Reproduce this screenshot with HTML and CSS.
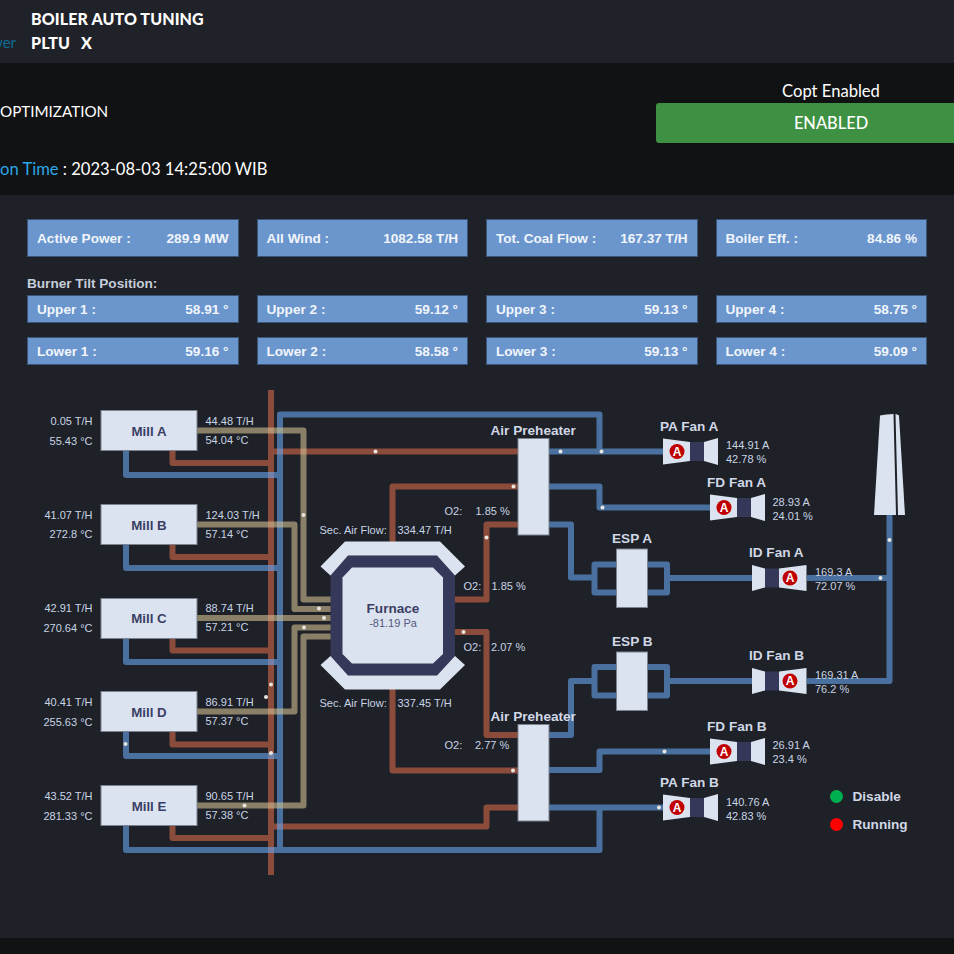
FILE: index.html
```html
<!DOCTYPE html>
<html lang="en">
	<head>
		<meta charset="UTF-8" />
		<meta name="viewport" content="width=device-width, initial-scale=1.0" />
		<title>Boiler Auto Tuning</title>
		<link rel="stylesheet" href="styles.css">
	</head>
	<body>
		<header class="topbar">
			<span class="crumb">wer</span>
			<div class="title">
				<div>BOILER AUTO TUNING</div>
				<div>PLTU <span class="unit">X</span></div>
			</div>
		</header>

		<section class="band">
			<div class="band-left">
				<div class="band-name">OPTIMIZATION</div>
				<div class="band-time"><span class="time-label">on Time</span> : 2023-08-03 14:25:00 WIB</div>
			</div>
			<div class="band-right">
				<div class="copt-label">Copt Enabled</div>
				<button class="copt-btn">ENABLED</button>
			</div>
		</section>

		<main class="content">
			<div class="stats">
				<div class="row row-main">
					<div class="card"><span>Active Power :</span><span>289.9 MW</span></div>
					<div class="card"><span>All Wind :</span><span>1082.58 T/H</span></div>
					<div class="card"><span>Tot. Coal Flow :</span><span>167.37 T/H</span></div>
					<div class="card"><span>Boiler Eff. :</span><span>84.86 %</span></div>
				</div>
				<div class="tilt-label">Burner Tilt Position:</div>
				<div class="row">
					<div class="card"><span>Upper 1 :</span><span>58.91 °</span></div>
					<div class="card"><span>Upper 2 :</span><span>59.12 °</span></div>
					<div class="card"><span>Upper 3 :</span><span>59.13 °</span></div>
					<div class="card"><span>Upper 4 :</span><span>58.75 °</span></div>
				</div>
				<div class="row">
					<div class="card"><span>Lower 1 :</span><span>59.16 °</span></div>
					<div class="card"><span>Lower 2 :</span><span>58.58 °</span></div>
					<div class="card"><span>Lower 3 :</span><span>59.13 °</span></div>
					<div class="card"><span>Lower 4 :</span><span>59.09 °</span></div>
				</div>
			</div>

			<svg class="diagram" viewBox="0 380 954 558" width="954" height="558">
				<defs>
					<g id="fan">
						<path class="shell" d="M0 -13L27 -9.5V9.5L0 13Z" />
						<rect class="neck" x="27" y="-9.5" width="14" height="19" />
						<path class="shell" d="M41 -9.5L55 -13.5V13.5L41 9.5Z" />
						<circle class="motor" cx="14" cy="0" r="7.5" />
						<text class="motor-a" x="14" y="4">A</text>
					</g>
					<g id="fan-id">
						<path class="shell" d="M0 -13L13 -9.5V9.5L0 13Z" />
						<rect class="neck" x="13" y="-9.5" width="14" height="19" />
						<path class="shell" d="M27 -9.5L54.5 -13V13L27 9.5Z" />
						<circle class="motor" cx="38" cy="0" r="7.5" />
						<text class="motor-a" x="38" y="4">A</text>
					</g>
				</defs>

				<!-- flue / hot air -->
				<g class="pipes pipe-red">
					<path d="M271 390V875" />
					<path d="M172.500 451V463H271" />
					<path d="M172.500 544V557H271" />
					<path d="M172.500 638V650.500H271" />
					<path d="M172.500 732V744.500H271" />
					<path d="M172.500 825V838H271" />
					<path d="M271 451.500H518" />
					<path d="M271 826.500H486.500V807.500H518" />
					<path d="M392.500 545V486.500H518" />
					<path d="M455 599.500H486.500V524.500H518" />
					<path d="M455 632H486.500V735H518" />
					<path d="M392.500 688V770.500H518" />
				</g>

				<!-- air -->
				<g class="pipes pipe-blue">
					<path d="M126 451V475H280" />
					<path d="M126 544V568H280" />
					<path d="M126 638V662H280" />
					<path d="M126 732V756H280" />
					<path d="M126 825V850H599.500V807.500" />
					<path d="M280 850V414.500H599.500V451.500" />
					<path d="M549 451.500H663" />
					<path d="M549 486.500H599.500V507.500H710" />
					<path d="M549 524.500H571V577.500H594.500" />
					<path d="M594.500 564.500H667V592.500H594.500Z" />
					<path d="M667 578H752" />
					<path d="M807 578H889.500" />
					<path d="M889.500 515V681H807" />
					<path d="M549 735H571V681H594.500" />
					<path d="M594.500 667H667V695.500H594.500Z" />
					<path d="M667 681H752" />
					<path d="M549 770H599.500V751.500H710" />
					<path d="M549 807.500H663" />
				</g>

				<!-- coal -->
				<g class="pipes pipe-tan">
					<path d="M197 430.500H303.500V599.500H335" />
					<path d="M197 524.500H294.500V609H335" />
					<path d="M197 618H335" />
					<path d="M197 711.500H294.500V627.500H335" />
					<path d="M197 805.500H303.500V636.500H335" />
				</g>

				<g class="dots">
					<circle cx="303.500" cy="515" r="2" />
					<circle cx="319" cy="608.500" r="2" />
					<circle cx="324" cy="618" r="2" />
					<circle cx="304" cy="627.500" r="2" />
					<circle cx="271" cy="684.500" r="2" />
					<circle cx="266" cy="697" r="2" />
					<circle cx="125.500" cy="744" r="2" />
					<circle cx="271" cy="753" r="2" />
					<circle cx="244.500" cy="805.500" r="2" />
					<circle cx="375.500" cy="451.500" r="2" />
					<circle cx="513.500" cy="486.500" r="2" />
					<circle cx="486.500" cy="537.500" r="2" />
					<circle cx="463.500" cy="632" r="2" />
					<circle cx="513" cy="770.500" r="2" />
					<circle cx="560.500" cy="451.500" r="2" />
					<circle cx="601.500" cy="451.500" r="2" />
					<circle cx="602.500" cy="507.500" r="2" />
					<circle cx="664.500" cy="751.500" r="2" />
					<circle cx="659" cy="807.500" r="2" />
					<circle cx="889.500" cy="540" r="2" />
					<circle cx="880.500" cy="578" r="2" />
				</g>

				<!-- mills -->
				<rect class="box" x="101" y="410.500" width="96" height="40" />
				<rect class="box" x="101" y="504.500" width="96" height="40" />
				<rect class="box" x="101" y="598.500" width="96" height="40" />
				<rect class="box" x="101" y="691.500" width="96" height="40" />
				<rect class="box" x="101" y="785.500" width="96" height="40" />
				<text class="box-name" x="149" y="435.500">Mill A</text>
				<text class="box-name" x="149" y="529.500">Mill B</text>
				<text class="box-name" x="149" y="623">Mill C</text>
				<text class="box-name" x="149" y="716.500">Mill D</text>
				<text class="box-name" x="149" y="810.500">Mill E</text>

				<g class="val val-end">
					<text x="92.500" y="425">0.05 T/H</text>
					<text x="92.500" y="445">55.43 °C</text>
					<text x="92.500" y="519">41.07 T/H</text>
					<text x="92.500" y="538">272.8 °C</text>
					<text x="92.500" y="612">42.91 T/H</text>
					<text x="92.500" y="632">270.64 °C</text>
					<text x="92.500" y="706">40.41 T/H</text>
					<text x="92.500" y="726">255.63 °C</text>
					<text x="92.500" y="800">43.52 T/H</text>
					<text x="92.500" y="820">281.33 °C</text>
				</g>
				<g class="val">
					<text x="205.500" y="425">44.48 T/H</text>
					<text x="205.500" y="444">54.04 °C</text>
					<text x="205.500" y="519">124.03 T/H</text>
					<text x="205.500" y="537.500">57.14 °C</text>
					<text x="205.500" y="612">88.74 T/H</text>
					<text x="205.500" y="631">57.21 °C</text>
					<text x="205.500" y="706">86.91 T/H</text>
					<text x="205.500" y="725">57.37 °C</text>
					<text x="205.500" y="800">90.65 T/H</text>
					<text x="205.500" y="819">57.38 °C</text>

					<text x="319.500" y="534">Sec. Air Flow:</text>
					<text x="397.500" y="534">334.47 T/H</text>
					<text x="319.500" y="707">Sec. Air Flow:</text>
					<text x="397.500" y="707">337.45 T/H</text>

					<text x="444.500" y="515">O2:</text>
					<text x="475.500" y="515">1.85 %</text>
					<text x="463.500" y="590">O2:</text>
					<text x="491.500" y="590">1.85 %</text>
					<text x="463.500" y="651">O2:</text>
					<text x="491" y="651">2.07 %</text>
					<text x="444.500" y="749">O2:</text>
					<text x="475" y="749">2.77 %</text>

					<text x="726" y="449">144.91 A</text>
					<text x="726" y="463">42.78 %</text>
					<text x="772.500" y="505.500">28.93 A</text>
					<text x="772.500" y="520">24.01 %</text>
					<text x="815" y="576">169.3 A</text>
					<text x="815" y="590">72.07 %</text>
					<text x="815" y="679">169.31 A</text>
					<text x="815" y="693">76.2 %</text>
					<text x="772.500" y="749">26.91 A</text>
					<text x="772.500" y="763">23.4 %</text>
					<text x="726" y="806">140.76 A</text>
					<text x="726" y="820">42.83 %</text>
				</g>

				<!-- furnace -->
				<polygon class="furnace-wall" points="348,555.500 437,555.500 455,575 455,656.500 437,675.500 348,675.500 330.500,656.500 330.500,575" />
				<polygon class="furnace-hood" points="345,541.500 440,541.500 465,566.500 455,575.500 437,555.500 348,555.500 330.500,575.500 320.500,566.500" />
				<polygon class="furnace-hood" points="345,689.500 440,689.500 465,665 455,656 437,675.500 348,675.500 330.500,656 320.500,665" />
				<polygon class="furnace-core" points="352,567.500 433,567.500 443,577.500 443,654 433,663.500 352,663.500 342.500,654 342.500,577.500" />
				<text class="furnace-name" x="393" y="613">Furnace</text>
				<text class="furnace-val" x="393" y="627">-81.19 Pa</text>

				<!-- preheaters, esp -->
				<rect class="box" x="518" y="438.500" width="31" height="96.500" />
				<rect class="box" x="518" y="724.500" width="31" height="96.500" />
				<rect class="box" x="616.500" y="549" width="31" height="58.500" />
				<rect class="box" x="616.500" y="652" width="31" height="58.500" />

				<g class="label">
					<text x="490.500" y="435">Air Preheater</text>
					<text x="490.500" y="721">Air Preheater</text>
					<text x="612" y="542.500">ESP A</text>
					<text x="612" y="645.500">ESP B</text>
					<text x="660" y="431">PA Fan A</text>
					<text x="707" y="487">FD Fan A</text>
					<text x="749" y="557">ID Fan A</text>
					<text x="749" y="660">ID Fan B</text>
					<text x="707" y="731">FD Fan B</text>
					<text x="660" y="787">PA Fan B</text>
				</g>

				<use href="#fan" x="663" y="451.500" />
				<use href="#fan" x="710" y="507.500" />
				<use href="#fan-id" x="752" y="578" />
				<use href="#fan-id" x="752" y="681" />
				<use href="#fan" x="710" y="751.500" />
				<use href="#fan" x="663" y="807.500" />

				<!-- stack -->
				<path class="stack" d="M880 415.500Q886 414 893.500 414L896 515H874Z" />
				<path class="stack" d="M895.500 414Q897 414 899 415.500L905 515H898Z" />

				<circle class="led-green" cx="836.500" cy="796.500" r="6.500" />
				<circle class="led-red" cx="836.500" cy="824.500" r="6.500" />
				<g class="label">
					<text x="852.500" y="801">Disable</text>
					<text x="852.500" y="829">Running</text>
				</g>
			</svg>
		</main>

		<footer class="bottom"></footer>
	</body>
</html>
```

FILE: styles.css
```css
html, body {
	margin: 0;
	height: 954px;
	overflow: hidden;
	background: #1e2127;
}

body {
	font-family: Lato, "Open Sans", sans-serif;
	color: #fff;
}

.topbar {
	display: flex;
	height: 63px;
	background: #1f2329;
}

.crumb {
	flex: 0 0 25px;
	align-self: flex-end;
	margin: 0 0 11px -9px;
	color: #0d6c93;
	font-size: 15px;
	line-height: 20px;
	text-align: right;
}

.title {
	margin-left: 15px;
	padding-top: 7px;
	font-size: 16px;
	font-weight: 900;
	letter-spacing: 0.1px;
	line-height: 24px;
}

.title .unit {
	margin-left: 7px;
}

.band {
	display: flex;
	justify-content: space-between;
	height: 132px;
	background: #111213;
	font-size: 16.6px;
	line-height: 24px;
}

.band-left {
	padding-top: 36px;
}

.band-name {
	font-size: 15.2px;
}

.band-time {
	margin-top: 34px;
}

.time-label {
	color: #2ba6e6;
}

.band-right {
	flex: 0 0 298px;
	padding-top: 16px;
	text-align: center;
}

.copt-label {
	height: 24px;
	padding-left: 52px;
}

.copt-btn {
	display: block;
	width: 100%;
	height: 40px;
	padding: 0 0 2px 52px;
	border: none;
	border-radius: 3px 0 0 3px;
	background: #3e9142;
	color: #fff;
	font-family: inherit;
	font-size: 16.4px;
	font-weight: 500;
}

.content {
	height: 743px;
	overflow: hidden;
}

.stats {
	display: flex;
	flex-direction: column;
	gap: 14px;
	padding: 24px 27px 0;
	font-family: "Liberation Sans", Arial, sans-serif;
	font-size: 13.6px;
	font-weight: 700;
}

.row {
	display: grid;
	grid-template-columns: repeat(4, 1fr);
	gap: 18px;
}

.card {
	display: flex;
	justify-content: space-between;
	align-items: center;
	height: 28px;
	padding: 0 9px;
	border: 1px solid #3a5577;
	box-sizing: border-box;
	background: #6a96cd;
	color: #f1f5fb;
}

.row-main .card {
	height: 38px;
}

.tilt-label {
	height: 16px;
	margin: 5px 0 -11px;
	color: #c6cdda;
	line-height: 16px;
}

.diagram {
	display: block;
	margin-top: 15px;
	font-family: "Liberation Sans", Arial, sans-serif;
}

.pipes {
	fill: none;
	stroke-width: 6;
	stroke-linejoin: round;
	opacity: 0.6;
}

.pipe-red {
	stroke: #d5694a;
}

.pipe-blue {
	stroke: #67a5ed;
}

.pipe-tan {
	stroke: #d2bf93;
}

.dots {
	fill: #e8e4e0;
}

.box {
	fill: #dce3f0;
	stroke: #7c8290;
	stroke-width: 1;
}

.box-name {
	fill: #3a3e64;
	font-size: 13.3px;
	font-weight: 700;
	text-anchor: middle;
}

.val {
	fill: #c9d4e6;
	font-size: 11px;
}

.val-end {
	text-anchor: end;
}

.label {
	fill: #d0d7e6;
	font-size: 13.6px;
	font-weight: 700;
}

.furnace-wall {
	fill: #353859;
}

.furnace-hood,
.furnace-core {
	fill: #dce3f0;
}

.furnace-name {
	fill: #3a3e64;
	font-size: 13.6px;
	font-weight: 700;
	text-anchor: middle;
}

.furnace-val {
	fill: #52587c;
	font-size: 11px;
	text-anchor: middle;
}

.shell,
.stack {
	fill: #dce3f0;
}

.neck {
	fill: #353859;
}

.motor {
	fill: #c00000;
}

.motor-a {
	fill: #fff;
	font-size: 12px;
	font-weight: 700;
	text-anchor: middle;
}

.led-green {
	fill: #00b050;
}

.led-red {
	fill: #ff0000;
}

.bottom {
	height: 16px;
	background: #111213;
}
```
